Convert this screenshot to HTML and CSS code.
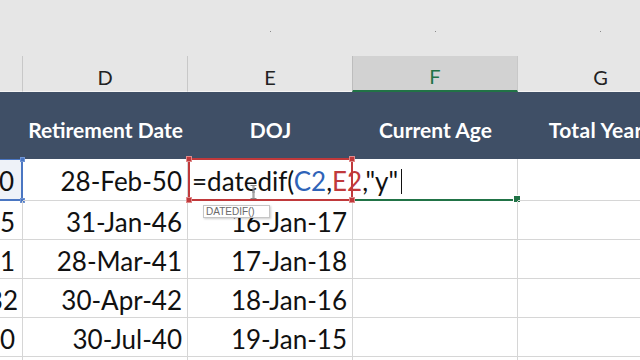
FILE: index.html
```html
<!DOCTYPE html>
<html>
<head>
<meta charset="utf-8">
<link rel="stylesheet" href="styles.css">
</head>
<body>
<div class="sheet">
  <div class="top"></div>
  <div class="top"></div>
  <div class="top"><span class="dot"></span></div>
  <div class="top"><span class="dot"></span></div>
  <div class="top"><span class="dot"></span></div>

  <div class="colhead"></div>
  <div class="colhead">D</div>
  <div class="colhead">E</div>
  <div class="colhead sel">F</div>
  <div class="colhead last">G</div>

  <div class="hdr"></div>
  <div class="hdr">Retirement Date</div>
  <div class="hdr">DOJ</div>
  <div class="hdr">Current Age</div>
  <div class="hdr wide">Total Years</div>

  <div class="cell c refc">0<span class="hb t"></span><span class="hb b"></span></div>
  <div class="cell">28-Feb-50</div>
  <div class="cell edit"><span class="f">=datedif(<span class="blue">C2</span>,<span class="red">E2</span>,"y"<span class="caret"></span></span><span class="hr tl"></span><span class="hr tr"></span><span class="hr bl"></span><span class="hr br"></span><span class="tip">DATEDIF()</span><svg class="ibeam" width="7" height="14" viewBox="0 0 7 14"><path d="M0.5 0.5h2.5v13h-2.5M6.5 0.5h-2.5v13h2.5M3 0.5h1M3 13.5h1M2 7h3" fill="none" stroke="#8a8a8a" stroke-width="1"/></svg></div>
  <div class="cell active"><span class="hg"></span></div>
  <div class="cell"></div>

  <div class="cell c">5</div>
  <div class="cell">31-Jan-46</div>
  <div class="cell">16-Jan-17</div>
  <div class="cell"></div>
  <div class="cell"></div>

  <div class="cell c">1</div>
  <div class="cell">28-Mar-41</div>
  <div class="cell">17-Jan-18</div>
  <div class="cell"></div>
  <div class="cell"></div>

  <div class="cell c tight">32</div>
  <div class="cell">30-Apr-42</div>
  <div class="cell">18-Jan-16</div>
  <div class="cell"></div>
  <div class="cell"></div>

  <div class="cell c">0</div>
  <div class="cell">30-Jul-40</div>
  <div class="cell">19-Jan-15</div>
  <div class="cell"></div>
  <div class="cell"></div>

  <div class="cell c"></div>
  <div class="cell"></div>
  <div class="cell"></div>
  <div class="cell"></div>
  <div class="cell"></div>
</div>
</body>
</html>
```
FILE: styles.css
```css
html, body {
  margin: 0;
  padding: 0;
  width: 640px;
  height: 360px;
  overflow: hidden;
  background: #ffffff;
}
.sheet {
  display: grid;
  grid-template-columns: 23px 165px 165px 165px 165px;
  grid-template-rows: 56px 36px 67px 42px 39px 39px 39px 39px 30px;
  width: 683px;
  font-family: "Lato", "Open Sans", sans-serif;
}
.top {
  background: #e6e6e6;
  display: flex;
  justify-content: center;
  align-items: flex-start;
}
.dot {
  width: 1px;
  height: 1px;
  margin-top: 31px;
  background: #8a8a8a;
}
.colhead {
  background: #e6e6e6;
  border-right: 1px solid #c8c8c8;
  border-bottom: 1px solid #f4f4f4;
  box-sizing: border-box;
  display: flex;
  align-items: center;
  justify-content: center;
  font-size: 20px;
  color: #222;
  padding-top: 6px;
}
.colhead.sel {
  background: #d2d2d2;
  color: #217346;
  border-bottom: 2px solid #217346;
  border-left: 1px solid #bdbdbd;
  margin-left: -1px;
}
.colhead.last { border-right: none; }
.hdr {
  background: #3f4f66;
  color: #ffffff;
  font-weight: 700;
  font-size: 21px;
  display: flex;
  align-items: center;
  justify-content: center;
  padding-top: 7px;
  white-space: nowrap;
  overflow: hidden;
}
.hdr.wide { letter-spacing: 0.3px; }
.cell {
  box-sizing: border-box;
  border-right: 1px solid #d6d6d6;
  border-bottom: 1px solid #d6d6d6;
  display: flex;
  align-items: center;
  justify-content: flex-end;
  padding: 3px 5px 0 0;
  font-size: 26px;
  color: #111;
  white-space: nowrap;
  position: relative;
}
.cell.c {
  overflow: hidden;
  padding-right: 7px;
}
.cell.c.tight { padding-right: 4px; }
.refc {
  background: #eef2f8;
  border-right: 2px solid #4a76c2;
  border-bottom: 2px solid #4a76c2;
  border-top: 1px solid #4a76c2;
  overflow: visible !important;
}
.hb {
  position: absolute;
  right: -4px;
  width: 5px;
  height: 5px;
  background: #4a76c2;
  border: 1px solid #6f93d2;
  box-sizing: border-box;
}
.hb.t { top: -3px; }
.hb.b { bottom: -4px; }
.edit {
  justify-content: flex-start;
  padding: 3px 0 0 2px;
  border: 2px solid #c0393b;
  margin-top: -1px;
  z-index: 3;
  background: #fff;
  overflow: visible;
}
.f { position: relative; }
.blue { color: #2f63b8; }
.red { color: #c0393b; }
.caret {
  display: inline-block;
  width: 1px;
  height: 25px;
  background: #111;
  margin-left: 3px;
  vertical-align: -3px;
}
.hr {
  position: absolute;
  width: 6px;
  height: 6px;
  background: #c0393b;
  border: 1px solid #e08a8b;
  box-sizing: border-box;
}
.hr.tl { top: -4px; left: -4px; }
.hr.tr { top: -4px; right: -4px; }
.hr.bl { bottom: -4px; left: -4px; }
.hr.br { bottom: -4px; right: -4px; }
.tip {
  position: absolute;
  left: 13px;
  top: 45px;
  width: 67px;
  height: 13px;
  box-sizing: border-box;
  background: #fff;
  border: 1px solid #c6c6c6;
  box-shadow: 1px 1px 2px rgba(0,0,0,0.2);
  font-family: "Liberation Sans", sans-serif;
  font-size: 10px;
  line-height: 11px;
  color: #6a6a6a;
  padding-left: 2px;
}
.ibeam {
  position: absolute;
  left: 60px;
  top: 25px;
}
.active {
  border-bottom: 2px solid #217346;
}
.hg {
  position: absolute;
  right: -4px;
  bottom: -4px;
  width: 6px;
  height: 6px;
  background: #217346;
  border: 1px solid #ffffff;
}
```
